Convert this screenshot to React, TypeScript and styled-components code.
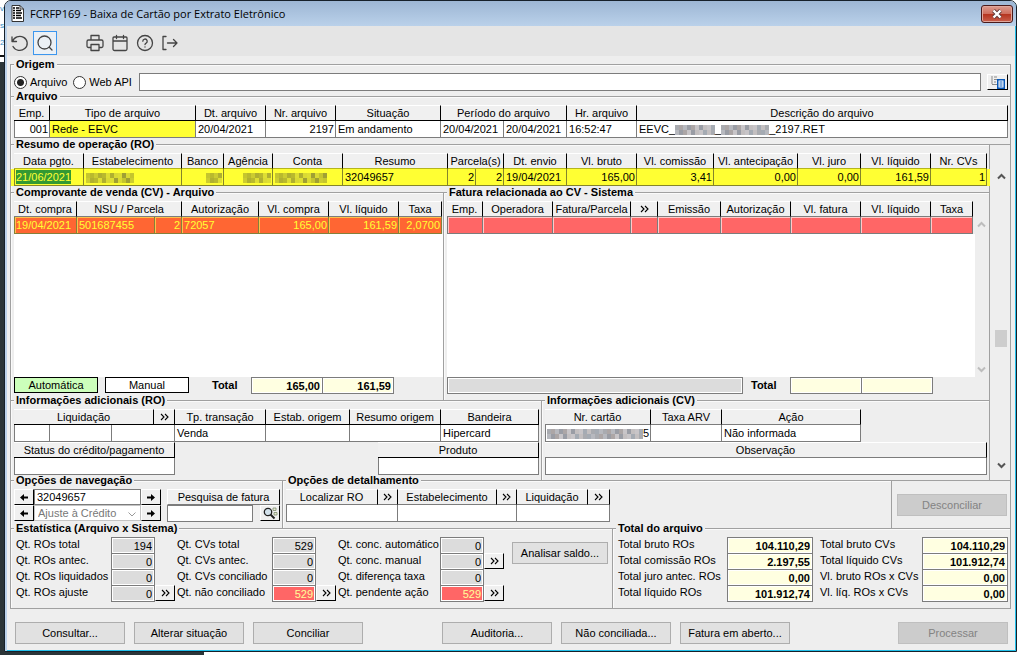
import React from "react";
import styled, { createGlobalStyle, css } from "styled-components";

const GlobalStyle = createGlobalStyle`
  * { box-sizing: border-box; }
  body { margin: 0; background: #fff; }
  body, button, input, select, table {
    font-family: "Liberation Sans", Arial, sans-serif;
    font-size: 11px;
    line-height: 14px;
    color: #000;
  }
`;

const LINE = "#a0a0a0";
const EDGE = "#7c7c7c";
const FACE = "#eeeeee";

/* ---------- desktop and window frame ---------- */

const Desktop = styled.div`
  position: relative;
  min-height: 100vh;
  padding: 0 3px 3px 4px;
  overflow: hidden;
  background:
    linear-gradient(#2b3538, #2b3538) 0 100% / 204px 4px no-repeat,
    linear-gradient(#fff 55px, #111 55px, #111 57px, #fff 57px, #fff 62px, #2b3538 62px) 0 0 / 5px 100% no-repeat,
    #fff;
`;

const Backdrop = styled.div`
  position: absolute;
  left: 0;
  top: 0;
  font-size: 8px;
  line-height: 17px;
  color: #3a8fc4;
`;

const Window = styled.main`
  position: relative;
  border: 1px solid #16202a;
  border-radius: 7px 7px 0 0;
  background: ${FACE};
  box-shadow: inset 2px 0 0 #bcd2ea, inset -1px -1px 0 #22c0ea;
  min-height: calc(100vh - 3px);
  overflow: hidden;
`;

const TitleBar = styled.header`
  display: flex;
  align-items: center;
  height: 25px;
  padding: 0 3px 0 6px;
  gap: 6px;
  background: linear-gradient(#9db6d4, #bad1ea);
`;

const Title = styled.h1`
  flex: 1;
  margin: 0;
  font: 400 11px/18px "Open Sans", sans-serif;
`;

const CloseButton = styled.button`
  display: grid;
  place-items: center;
  width: 32px;
  height: 18px;
  padding: 0;
  border: 1px solid #4a1a1a;
  border-radius: 3px;
  box-shadow: inset 0 0 0 1px #e0a79c;
  background: linear-gradient(#dc9c90, #cf6f5e 48%, #b5341f 52%, #c9604d);
`;

const Toolbar = styled.nav`
  display: flex;
  align-items: center;
  gap: 1px;
  height: 30px;
  margin: 0 1px 0 2px;
  padding: 4px 0 0 1px;
  background: #e5e5e5;
`;

const ToolButton = styled.button<{ $active?: boolean; $apart?: boolean }>`
  display: grid;
  place-items: center;
  width: 24px;
  height: 24px;
  padding: 0;
  margin-left: ${(p) => (p.$apart ? 25 : 0)}px;
  border: 1px solid ${(p) => (p.$active ? "#3c96ee" : "transparent")};
  background: ${(p) => (p.$active ? "#ebf0f5" : "transparent")};
`;

const Content = styled.div`
  padding: 0 5px 6px 5px;
`;

/* ---------- groups ---------- */

const Group = styled.fieldset<{ $min: number; $w?: number; $right?: boolean; $bottom?: boolean; $first?: boolean }>`
  min-width: 0;
  min-height: ${(p) => p.$min}px;
  margin: ${(p) => (p.$first ? 0 : -8)}px 0 0;
  padding: 1px 2px 0 3px;
  border: 0 solid ${LINE};
  border-top-width: 1px;
  border-left-width: 1px;
  border-right-width: ${(p) => (p.$right ? 1 : 0)}px;
  border-bottom-width: ${(p) => (p.$bottom ? 1 : 0)}px;
  box-shadow: inset 1px 1px 0 #fafafa;
  flex: ${(p) => (p.$w ? `0 0 ${p.$w}px` : "1 1 0")};
`;

const Legend = styled.legend`
  padding: 0 2px;
  font-weight: 700;
  line-height: 16px;
  background: linear-gradient(transparent 7px, ${FACE} 7px, ${FACE} 11px, transparent 11px);
`;

const Pair = styled.div`
  display: flex;
`;

const MainRow = styled.div`
  display: flex;
`;

const MainColumn = styled.div`
  flex: 1;
  min-width: 0;
`;

const SideScroll = styled.div`
  flex: 0 0 21px;
  display: flex;
  border: solid ${LINE};
  border-width: 1px 1px 0 0;
  padding: 24px 3px 7px 5px;
`;

const Track = styled.div<{ $w: number }>`
  flex: 0 0 ${(p) => p.$w}px;
  display: flex;
  flex-direction: column;
  align-items: center;
  justify-content: space-between;
  padding: 4px 0;
  background: ${FACE};
`;

const Spacer = styled.div<{ $grow: number }>`
  flex: ${(p) => p.$grow};
`;

const Thumb = styled.div`
  width: 100%;
  height: 17px;
  background: #cdcdcd;
`;

/* ---------- tables ---------- */

type Tone = "plain" | "yellow" | "orange" | "red";

const Grid = styled.table<{ $w?: number }>`
  width: ${(p) => (p.$w ? `${p.$w}px` : "100%")};
  table-layout: fixed;
  border-collapse: separate;
  border-spacing: 0;
`;

const Head = styled.th<{ $dark?: boolean; $tone?: Tone }>`
  height: 16px;
  padding: 0;
  font-weight: 400;
  line-height: 13px;
  text-align: center;
  white-space: nowrap;
  background: #f0f0f0;
  border-top: 1px solid #fff;
  border-right: 1px solid #000;
  border-bottom: 1px solid ${(p) => (p.$tone === "yellow" ? "#b5b51a" : p.$dark ? "#000" : EDGE)};
`;

const MoreButton = styled.button<{ $boxed?: boolean }>`
  display: grid;
  place-items: center;
  width: 100%;
  height: 13px;
  padding: 0;
  border: 0;
  background: transparent;
  ${(p) =>
    p.$boxed &&
    css`
      width: 20px;
      height: 16px;
      background: #f0f0f0;
      border: solid;
      border-width: 1px;
      border-color: #fff #000 #000 #fff;
    `}
`;

const tones = {
  plain: css`background: #fff;`,
  yellow: css`background: #ffff33; border-color: #85852a;`,
  orange: css`background: #ff6633; color: #ffff33; border-color: #85803a; box-shadow: inset 1px 1px 0 #ffc04a;`,
  red: css`background: #ff6666; box-shadow: inset 1px 1px 0 #ffc9c9;`,
};

const Row = styled.tr<{ $tone: Tone }>`
  ${(p) => p.$tone === "yellow" && css`box-shadow: -3px 0 0 #ffff33, 3px 0 0 #ffff33;`}
`;

const Cell = styled.td<{ $tone: Tone; $right?: boolean; $fill?: string }>`
  height: 17px;
  padding: 0 1px 0 2px;
  line-height: 16px;
  white-space: nowrap;
  text-align: ${(p) => (p.$right ? "right" : "left")};
  border: 0 solid ${EDGE};
  border-right-width: 1px;
  border-bottom-width: 1px;
  &:first-child { border-left-width: 1px; padding-left: 1px; }
  ${(p) => tones[p.$tone]}
  ${(p) => p.$fill && css`background: ${p.$fill};`}
`;

const Selected = styled.span`
  display: inline-block;
  height: 14px;
  line-height: 14px;
  vertical-align: top;
  margin-top: 1px;
  color: #ffff33;
  background: #339933;
`;

type HeadDef = { label?: string; span?: number; more?: boolean };
type CellDef = { v?: React.ReactNode; right?: boolean; fill?: string; span?: number };

const Chevrons = () => (
  <svg width="9" height="8" viewBox="0 0 9 8" fill="none" stroke="#000" strokeWidth="1.1" aria-hidden="true">
    <path d="M1 1l3 3-3 3M5 1l3 3-3 3" />
  </svg>
);

function DataTable(props: {
  cols: (number | null)[];
  head: HeadDef[];
  cells: CellDef[];
  tone?: Tone;
  dark?: boolean;
  width?: number;
}) {
  const tone = props.tone ?? "plain";
  return (
    <Grid $w={props.width}>
      <colgroup>
        {props.cols.map((w, i) => (
          <col key={i} width={w ?? undefined} />
        ))}
      </colgroup>
      <thead>
        <tr>
          {props.head.map((h, i) => (
            <Head key={i} colSpan={h.span} $dark={props.dark} $tone={tone}>
              {h.more ? (
                <MoreButton type="button" aria-label="Detalhar">
                  <Chevrons />
                </MoreButton>
              ) : (
                h.label
              )}
            </Head>
          ))}
        </tr>
      </thead>
      <tbody>
        <Row $tone={tone}>
          {props.cells.map((c, i) => (
            <Cell key={i} colSpan={c.span} $tone={tone} $right={c.right} $fill={c.fill}>
              {c.v}
            </Cell>
          ))}
        </Row>
      </tbody>
    </Grid>
  );
}

/* Masked values are drawn as a mosaic of small blocks. */
const MaskSvg = styled.svg`
  vertical-align: middle;
`;

const greys = ["#a9abb0", "#c3bfc0", "#9a9da5", "#b7b9bf", "#a5abb3", "#c8c5c8", "#aca6a6"];
const golds = ["#c5c52e", "#dada33", "#b0b030", "#cccc30", "#a0a034", "#dede33", "#b9b92e"];

function Mask({ cols, gold }: { cols: number; gold?: boolean }) {
  const palette = gold ? golds : greys;
  const blocks = [];
  for (let x = 0; x < cols; x++) {
    for (let y = 0; y < 2; y++) {
      const shade = palette[(x * 5 + y * 3 + ((x * x) % 4)) % palette.length];
      blocks.push(<rect key={`${x}-${y}`} x={x * 4} y={y * 5} width="4" height="5" fill={shade} />);
    }
  }
  return (
    <MaskSvg width={cols * 4} height="10" aria-hidden="true">
      {blocks}
    </MaskSvg>
  );
}

/* ---------- fields and buttons ---------- */

const Origin = styled.div`
  display: flex;
  align-items: center;
  height: 18px;
  label { display: flex; align-items: center; gap: 3px; margin-right: 6px; }
`;

const Radio = styled.input`
  appearance: none;
  width: 13px;
  height: 13px;
  margin: 0;
  border: 1px solid #333;
  border-radius: 50%;
  background: #fff;
  &:checked { background: radial-gradient(circle, #222 0 3px, #fff 4px); }
`;

const Field = styled.input<{ $w?: number; $fill?: string; $bold?: boolean; $right?: boolean; $ink?: string; $h?: number }>`
  ${(p) => (p.$w ? css`width: ${p.$w}px;` : css`flex: 1; width: 100%;`)}
  min-width: 0;
  height: ${(p) => p.$h ?? 17}px;
  padding: 0 2px;
  border: 1px solid ${EDGE};
  border-radius: 0;
  background: ${(p) => p.$fill ?? "#fff"};
  color: ${(p) => p.$ink ?? "#000"};
  font-weight: ${(p) => (p.$bold ? 700 : 400)};
  text-align: ${(p) => (p.$right ? "right" : "left")};
  ${(p) => p.$fill && css`box-shadow: inset 1px 1px 0 #fff, inset -1px -1px 0 #fff;`}
`;

const PathField = styled(Field)`
  margin: 0 6px 0 1px;
`;

const RaisedButton = styled.button<{ $w: number }>`
  display: grid;
  place-items: center;
  flex: none;
  width: ${(p) => p.$w}px;
  height: 16px;
  padding: 0;
  background: #f0f0f0;
  border: 1px solid;
  border-color: #fff #000 #000 #fff;
`;

const Tag = styled.button<{ $fill: string }>`
  width: 84px;
  height: 16px;
  padding: 0;
  margin-right: 7px;
  border: 1px solid #000;
  line-height: 14px;
  background: ${(p) => p.$fill};
`;

const Button = styled.button<{ $w: number }>`
  flex: none;
  width: ${(p) => p.$w}px;
  height: 22px;
  padding: 0;
  border: 1px solid #adadad;
  background: #e1e1e1;
  &:disabled { color: #838383; background: #cccccc; border-color: #bfbfbf; }
`;

const Listing = styled.div`
  display: flex;
`;

const ListBody = styled.div`
  flex: 1;
  min-width: 0;
`;

const Blank = styled.div`
  height: 143px;
  margin-right: -2px;
  background: #fff;
`;

const ListScroll = styled.div`
  display: flex;
  padding-top: 16px;
  margin-left: 2px;
`;

const Footer = styled.div`
  display: flex;
  align-items: flex-start;
`;

const TotalLabel = styled.span<{ $w: number }>`
  width: ${(p) => p.$w}px;
  padding-left: ${(p) => (p.$w > 50 ? 16 : 8)}px;
  font-weight: 700;
  line-height: 16px;
`;

const JoinedFields = styled.div`
  display: flex;
  input + input { margin-left: -1px; }
`;

const Between = styled.div`
  display: flex;
  justify-content: space-between;
`;

const NavArea = styled.div`
  display: flex;
  gap: 6px;
`;

const NavLine = styled.div`
  display: flex;
  height: 16px;
`;

const SelectBox = styled.div`
  position: relative;
  display: flex;
  svg { position: absolute; right: 5px; top: 7px; pointer-events: none; }
`;

const Select = styled.select`
  appearance: none;
  width: 107px;
  height: 16px;
  padding: 0 3px;
  border: 1px solid #c4c4c4;
  border-radius: 0;
  background: #fff;
  color: #777;
  opacity: 1;
`;

const SearchHead = styled.label`
  display: block;
  width: 113px;
  height: 16px;
  line-height: 14px;
  text-align: center;
  background: #f0f0f0;
  border: 1px solid;
  border-color: #fff #000 ${EDGE} #fff;
`;

const ActionCell = styled.div`
  flex: 0 0 120px;
  border: solid ${LINE};
  border-width: 1px 1px 0 1px;
  padding: 13px 3px 0 5px;
`;

const Stats = styled.div`
  display: flex;
`;

const StatColumn = styled.div<{ $label: number; $extra?: number }>`
  display: grid;
  grid-template-columns: ${(p) => p.$label}px auto ${(p) => p.$extra ?? 0}px;
  grid-auto-rows: 16px;
  label { padding-left: 2px; line-height: 15px; white-space: nowrap; }
`;

const TotalsRow = styled.div`
  display: flex;
  justify-content: space-between;
`;

const Analyse = styled.div`
  padding: 5px 0 0 8px;
`;

const ButtonBar = styled.footer`
  display: flex;
  padding: 13px 3px 0 5px;
  > :last-child { margin-left: auto; }
`;

const ButtonSet = styled.div`
  display: flex;
  gap: 9px;
  & + & { margin-left: 79px; }
`;

/* ---------- drawings ---------- */

const Chevron = ({ up, tint }: { up?: boolean; tint: string }) => (
  <svg width="9" height="7" viewBox="0 0 9 7" fill="none" stroke={tint} strokeWidth="2" aria-hidden="true">
    <path d={up ? "M1 5.5l3.5-3.5L8 5.5" : "M1 1.5L4.500 5 8 1.500"} />
  </svg>
);

const Arrow = ({ left }: { left?: boolean }) => (
  <svg width="8" height="7" viewBox="0 0 8 7" aria-hidden="true">
    <path d={left ? "M0 3.500L4 0v2.500h4v2H4V7z" : "M8 3.500L4 0v2.500H0v2h4V7z"} fill="#000" />
  </svg>
);

const DocIcon = () => (
  <svg width="13" height="17" viewBox="0 0 13 17" aria-hidden="true">
    <path d="M1 .5h8l3.500 3.500v12.500H1z" fill="#fff" stroke="#333" />
    <path d="M9 .5V4h3.500" fill="none" stroke="#333" />
    <path d="M2 3h2M5 3h3M2 5.500h2M5 5.500h5M2 8h2M5 8h6M2 10.500h2M5 10.500h5M2 13h2M5 13h6" stroke="#000" strokeWidth="1.3" />
  </svg>
);

const CopyIcon = () => (
  <svg width="14" height="13" viewBox="0 0 14 13" fill="none" aria-hidden="true">
    <path d="M1 0v8M3 1h3M3 3.500h3M3 6h2M1 8.500h5" stroke="#8a8a8a" />
    <rect x="6.750" y="3.750" width="6.500" height="8.500" fill="#fff" stroke="#0a58b8" strokeWidth="1.500" />
    <path d="M8.500 6h3M8.500 8h3M8.500 10h3" stroke="#0a58b8" />
  </svg>
);

const FindIcon = () => (
  <svg width="15" height="13" viewBox="0 0 15 13" fill="none" aria-hidden="true">
    <circle cx="5" cy="5" r="3.700" fill="#d3e2ec" stroke="#222" strokeWidth="1.300" />
    <path d="M7.500 7.500l4 4" stroke="#222" strokeWidth="2" />
    <path d="M10 1h3v2.500h-3zM11 5.500h3V8h-3z" fill="#e4ecd0" stroke="#7d8a70" strokeWidth=".8" />
  </svg>
);

const ToolIcon = ({ children }: { children: React.ReactNode }) => (
  <svg width="20" height="20" viewBox="0 0 20 20" fill="none" stroke="#444" strokeWidth="1.300" strokeLinecap="round" strokeLinejoin="round" aria-hidden="true">
    {children}
  </svg>
);

/* ---------- data ---------- */

const GREY = "#dcdcdc";
const CREAM = "#ffffe1";
const RED = "#ff6666";

type Stat = { label: string; value: string; alert?: boolean; more?: boolean };

const stats: { label: number; items: Stat[] }[] = [
  {
    label: 97,
    items: [
      { label: "Qt. ROs total", value: "194" },
      { label: "Qt. ROs antec.", value: "0" },
      { label: "Qt. ROs liquidados", value: "0" },
      { label: "Qt. ROs ajuste", value: "0", more: true },
    ],
  },
  {
    label: 97,
    items: [
      { label: "Qt. CVs total", value: "529" },
      { label: "Qt. CVs antec.", value: "0" },
      { label: "Qt. CVs conciliado", value: "0" },
      { label: "Qt. não conciliado", value: "529", alert: true, more: true },
    ],
  },
  {
    label: 104,
    items: [
      { label: "Qt. conc. automático", value: "0" },
      { label: "Qt. conc. manual", value: "0", more: true },
      { label: "Qt. diferença taxa", value: "0" },
      { label: "Qt. pendente ação", value: "529", alert: true, more: true },
    ],
  },
];

const totals: { label: number; items: Stat[] }[] = [
  {
    label: 111,
    items: [
      { label: "Total bruto ROs", value: "104.110,29" },
      { label: "Total comissão ROs", value: "2.197,55" },
      { label: "Total juro antec. ROs", value: "0,00" },
      { label: "Total líquido ROs", value: "101.912,74" },
    ],
  },
  {
    label: 104,
    items: [
      { label: "Total bruto CVs", value: "104.110,29" },
      { label: "Total líquido CVs", value: "101.912,74" },
      { label: "Vl. bruto ROs x CVs", value: "0,00" },
      { label: "Vl. líq. ROs x CVs", value: "0,00" },
    ],
  },
];

const slug = (s: string) => s.toLowerCase().replace(/[^a-z]+/g, "-");

export default function App() {
  return (
    <Desktop>
      <GlobalStyle />
      <Backdrop aria-hidden="true">
        v<br />s<br />2
      </Backdrop>
      <Window>
        <TitleBar>
          <DocIcon />
          <Title>FCRFP169 - Baixa de Cartão por Extrato Eletrônico</Title>
          <CloseButton type="button" aria-label="Fechar">
            <svg width="12" height="10" viewBox="0 0 12 10" aria-hidden="true">
              <path d="M2.500 1.500l7 7M9.500 1.500l-7 7" stroke="#5b3a3a" strokeWidth="4" />
              <path d="M2.500 1.500l7 7M9.500 1.500l-7 7" stroke="#fff" strokeWidth="2.400" />
            </svg>
          </CloseButton>
        </TitleBar>
        <Toolbar>
          <ToolButton type="button" aria-label="Limpar">
            <ToolIcon>
              <path d="M2 4v4.500h4.500M2.500 8.500a7.500 7 0 1 1 .5 5" />
            </ToolIcon>
          </ToolButton>
          <ToolButton type="button" aria-label="Pesquisar" $active>
            <ToolIcon>
              <circle cx="9.500" cy="9.500" r="6.500" />
              <path d="M14.300 14.300L17 17" />
            </ToolIcon>
          </ToolButton>
          <ToolButton type="button" aria-label="Imprimir" $apart>
            <ToolIcon>
              <path d="M6 7V2.500h8V7M6 14.500H3.500A1.500 1.500 0 0 1 2 13V8.500A1.500 1.500 0 0 1 3.500 7h13A1.500 1.500 0 0 1 18 8.500V13a1.500 1.500 0 0 1-1.500 1.500H14M6 11.500h8v6H6z" />
            </ToolIcon>
          </ToolButton>
          <ToolButton type="button" aria-label="Calendário">
            <ToolIcon>
              <path d="M4 4h12a1 1 0 0 1 1 1v11a1.500 1.500 0 0 1-1.500 1.500h-11A1.500 1.500 0 0 1 3 16V5a1 1 0 0 1 1-1zM3 8h14M6.500 2.500v3M13.500 2.500v3" />
            </ToolIcon>
          </ToolButton>
          <ToolButton type="button" aria-label="Ajuda">
            <ToolIcon>
              <circle cx="10" cy="10" r="7.500" />
              <path d="M7.800 8.200a2.200 2.200 0 1 1 3.300 1.900c-.8.4-1.100.8-1.100 1.500M10 13.800v.2" />
            </ToolIcon>
          </ToolButton>
          <ToolButton type="button" aria-label="Sair">
            <ToolIcon>
              <path d="M6 3.500H3v13h3M7.500 10H17M13.500 6.500L17 10l-3.500 3.500" />
            </ToolIcon>
          </ToolButton>
        </Toolbar>

        <Content>
          <Group $min={40} $right $first>
            <Legend>Origem</Legend>
            <Origin>
              <label>
                <Radio type="radio" name="origem" defaultChecked /> Arquivo
              </label>
              <label>
                <Radio type="radio" name="origem" /> Web API
              </label>
              <PathField type="text" aria-label="Caminho do arquivo" $h={18} />
              <RaisedButton type="button" $w={21} aria-label="Abrir arquivo">
                <CopyIcon />
              </RaisedButton>
            </Origin>
          </Group>

          <Group $min={56} $right>
            <Legend>Arquivo</Legend>
            <DataTable
              dark
              cols={[36, 146, 70, 70, 105, 63, 63, 70, null]}
              head={[
                { label: "Emp." },
                { label: "Tipo de arquivo" },
                { label: "Dt. arquivo" },
                { label: "Nr. arquivo" },
                { label: "Situação" },
                { label: "Período do arquivo", span: 2 },
                { label: "Hr. arquivo" },
                { label: "Descrição do arquivo" },
              ]}
              cells={[
                { v: "001", right: true },
                { v: "Rede - EEVC", fill: "#ffff33" },
                { v: "20/04/2021" },
                { v: "2197", right: true },
                { v: "Em andamento" },
                { v: "20/04/2021" },
                { v: "20/04/2021" },
                { v: "16:52:47" },
                { v: <>EEVC_<Mask cols={10} />_<Mask cols={12} />_2197.RET</> },
              ]}
            />
          </Group>

          <MainRow>
            <MainColumn>
              <Group $min={56} $right>
                <Legend>Resumo de operação (RO)</Legend>
                <DataTable
                  tone="yellow"
                  cols={[70, null, 42, 49, 70, 105, 28, 28, 63, 70, 77, 84, 63, 70, 56]}
                  head={[
                    { label: "Data pgto." },
                    { label: "Estabelecimento" },
                    { label: "Banco" },
                    { label: "Agência" },
                    { label: "Conta" },
                    { label: "Resumo" },
                    { label: "Parcela(s)", span: 2 },
                    { label: "Dt. envio" },
                    { label: "Vl. bruto" },
                    { label: "Vl. comissão" },
                    { label: "Vl. antecipação" },
                    { label: "Vl. juro" },
                    { label: "Vl. líquido" },
                    { label: "Nr. CVs" },
                  ]}
                  cells={[
                    { v: <Selected>21/06/2021</Selected> },
                    { v: <Mask cols={12} gold /> },
                    { v: <Mask cols={4} gold />, right: true },
                    { v: <Mask cols={7} gold />, right: true },
                    { v: <Mask cols={13} gold /> },
                    { v: "32049657" },
                    { v: "2", right: true },
                    { v: "2", right: true },
                    { v: "19/04/2021" },
                    { v: "165,00", right: true },
                    { v: "3,41", right: true },
                    { v: "0,00", right: true },
                    { v: "0,00", right: true },
                    { v: "161,59", right: true },
                    { v: "1", right: true },
                  ]}
                />
              </Group>

              <Pair>
                <Group $min={216} $w={433}>
                  <Legend>Comprovante de venda (CV) - Arquivo</Legend>
                  <DataTable
                    tone="orange"
                    width={428}
                    cols={[63, 78, 27, 77, 70, 70, 43]}
                    head={[
                      { label: "Dt. compra" },
                      { label: "NSU / Parcela", span: 2 },
                      { label: "Autorização" },
                      { label: "Vl. compra" },
                      { label: "Vl. líquido" },
                      { label: "Taxa" },
                    ]}
                    cells={[
                      { v: "19/04/2021" },
                      { v: "501687455" },
                      { v: "2", right: true },
                      { v: "72057" },
                      { v: "165,00", right: true },
                      { v: "161,59", right: true },
                      { v: "2,0700", right: true },
                    ]}
                  />
                  <Blank />
                  <Footer>
                    <Tag type="button" $fill="#ccffbb">Automática</Tag>
                    <Tag type="button" $fill="#fff">Manual</Tag>
                    <TotalLabel $w={55}>Total</TotalLabel>
                    <JoinedFields>
                      <Field aria-label="Total vl. compra" readOnly value="165,00" $w={72} $fill={CREAM} $bold $right />
                      <Field aria-label="Total vl. líquido" readOnly value="161,59" $w={72} $fill={CREAM} $bold $right />
                    </JoinedFields>
                  </Footer>
                </Group>

                <Group $min={216} $right>
                  <Legend>Fatura relacionada ao CV - Sistema</Legend>
                  <Listing>
                    <ListBody>
                      <DataTable
                        tone="red"
                        cols={[36, 70, 78, 27, 63, 70, 70, 70, null]}
                        head={[
                          { label: "Emp." },
                          { label: "Operadora" },
                          { label: "Fatura/Parcela" },
                          { more: true },
                          { label: "Emissão" },
                          { label: "Autorização" },
                          { label: "Vl. fatura" },
                          { label: "Vl. líquido" },
                          { label: "Taxa" },
                        ]}
                        cells={Array.from({ length: 9 }, () => ({}))}
                      />
                      <Blank />
                    </ListBody>
                    <ListScroll>
                      <Track $w={12}>
                        <Chevron up tint="#bdbdbd" />
                        <Chevron tint="#bdbdbd" />
                      </Track>
                    </ListScroll>
                  </Listing>
                  <Footer>
                    <Field aria-label="Mensagem" readOnly $w={296} $fill={GREY} />
                    <TotalLabel $w={47}>Total</TotalLabel>
                    <JoinedFields>
                      <Field aria-label="Total vl. fatura" readOnly $w={72} $fill={CREAM} />
                      <Field aria-label="Total vl. líquido da fatura" readOnly $w={72} $fill={CREAM} />
                    </JoinedFields>
                  </Footer>
                </Group>
              </Pair>

              <Pair>
                <Group $min={88} $w={531}>
                  <Legend>Informações adicionais (RO)</Legend>
                  <DataTable
                    width={525}
                    dark
                    cols={[36, 62, 42, 21, 91, 84, 91, 98]}
                    head={[
                      { label: "Liquidação", span: 3 },
                      { more: true },
                      { label: "Tp. transação" },
                      { label: "Estab. origem" },
                      { label: "Resumo origem" },
                      { label: "Bandeira" },
                    ]}
                    cells={[{}, {}, { span: 2 }, { v: "Venda" }, {}, {}, { v: "Hipercard" }]}
                  />
                  <Between>
                    <DataTable dark width={161} cols={[161]} head={[{ label: "Status do crédito/pagamento" }]} cells={[{}]} />
                    <DataTable dark width={161} cols={[161]} head={[{ label: "Produto" }]} cells={[{}]} />
                  </Between>
                </Group>
                <Group $min={88} $right>
                  <Legend>Informações adicionais (CV)</Legend>
                  <DataTable
                    width={316}
                    cols={[106, 71, 139]}
                    head={[{ label: "Nr. cartão" }, { label: "Taxa ARV" }, { label: "Ação" }]}
                    cells={[{ v: <><Mask cols={24} />5</>, right: true }, {}, { v: "Não informada" }]}
                  />
                  <DataTable cols={[null]} head={[{ label: "Observação" }]} cells={[{}]} />
                </Group>
              </Pair>
            </MainColumn>
            <SideScroll>
              <Track $w={12}>
                <Chevron up tint="#555" />
                <Spacer $grow={146} />
                <Thumb />
                <Spacer $grow={112} />
                <Chevron tint="#555" />
              </Track>
            </SideScroll>
          </MainRow>

          <Pair>
            <Group $min={56} $w={272}>
              <Legend>Opções de navegação</Legend>
              <NavArea>
                <div>
                  <NavLine>
                    <RaisedButton type="button" $w={20} aria-label="RO anterior"><Arrow left /></RaisedButton>
                    <Field aria-label="RO" defaultValue="32049657" $w={107} $h={16} />
                    <RaisedButton type="button" $w={20} aria-label="Próximo RO"><Arrow /></RaisedButton>
                  </NavLine>
                  <NavLine>
                    <RaisedButton type="button" $w={20} aria-label="Ajuste anterior"><Arrow left /></RaisedButton>
                    <SelectBox>
                      <Select aria-label="Tipo de ajuste" disabled>
                        <option>Ajuste à Crédito</option>
                      </Select>
                      <svg width="8" height="5" viewBox="0 0 8 5" fill="none" stroke="#999" aria-hidden="true">
                        <path d="M.5.500L4 4 7.500.500" />
                      </svg>
                    </SelectBox>
                    <RaisedButton type="button" $w={20} aria-label="Próximo ajuste"><Arrow /></RaisedButton>
                  </NavLine>
                </div>
                <div>
                  <SearchHead htmlFor="pesquisa-fatura">Pesquisa de fatura</SearchHead>
                  <Between>
                    <Field id="pesquisa-fatura" $w={86} />
                    <RaisedButton type="button" $w={20} aria-label="Pesquisar fatura"><FindIcon /></RaisedButton>
                  </Between>
                </div>
              </NavArea>
            </Group>
            <Group $min={56}>
              <Legend>Opções de detalhamento</Legend>
              <DataTable
                width={324}
                cols={[92, 20, 99, 20, 71, 22]}
                head={[
                  { label: "Localizar RO" },
                  { more: true },
                  { label: "Estabelecimento" },
                  { more: true },
                  { label: "Liquidação" },
                  { more: true },
                ]}
                cells={[{ span: 2 }, { span: 2 }, { span: 2 }]}
              />
            </Group>
            <ActionCell>
              <Button type="button" $w={110} disabled>Desconciliar</Button>
            </ActionCell>
          </Pair>

          <Pair>
            <Group $min={89} $w={602} $bottom>
              <Legend>Estatística (Arquivo x Sistema)</Legend>
              <Stats>
                {stats.map((col, i) => (
                  <StatColumn key={i} $label={col.label} $extra={20}>
                    {col.items.map((s) => (
                      <React.Fragment key={s.label}>
                        <label htmlFor={slug(s.label)}>{s.label}</label>
                        <Field id={slug(s.label)} readOnly value={s.value} $w={44} $right $fill={s.alert ? RED : GREY} $ink={s.alert ? "#ffff99" : "#000"} />
                        {s.more ? (
                          <MoreButton type="button" $boxed aria-label={`Detalhar ${s.label}`}>
                            <Chevrons />
                          </MoreButton>
                        ) : (
                          <span />
                        )}
                      </React.Fragment>
                    ))}
                  </StatColumn>
                ))}
                <Analyse>
                  <Button type="button" $w={96}>Analisar saldo...</Button>
                </Analyse>
              </Stats>
            </Group>
            <Group $min={89} $right $bottom>
              <Legend>Total do arquivo</Legend>
              <TotalsRow>
                {totals.map((col, i) => (
                  <StatColumn key={i} $label={col.label}>
                    {col.items.map((s) => (
                      <React.Fragment key={s.label}>
                        <label htmlFor={slug(s.label)}>{s.label}</label>
                        <Field id={slug(s.label)} readOnly value={s.value} $w={86} $bold $right $fill={CREAM} />
                        <span />
                      </React.Fragment>
                    ))}
                  </StatColumn>
                ))}
              </TotalsRow>
            </Group>
          </Pair>

          <ButtonBar>
            <ButtonSet>
              <Button type="button" $w={110}>Consultar...</Button>
              <Button type="button" $w={110}>Alterar situação</Button>
              <Button type="button" $w={110}>Conciliar</Button>
            </ButtonSet>
            <ButtonSet>
              <Button type="button" $w={110}>Auditoria...</Button>
              <Button type="button" $w={110}>Não conciliada...</Button>
              <Button type="button" $w={110}>Fatura em aberto...</Button>
            </ButtonSet>
            <Button type="button" $w={110} disabled>Processar</Button>
          </ButtonBar>
        </Content>
      </Window>
    </Desktop>
  );
}
